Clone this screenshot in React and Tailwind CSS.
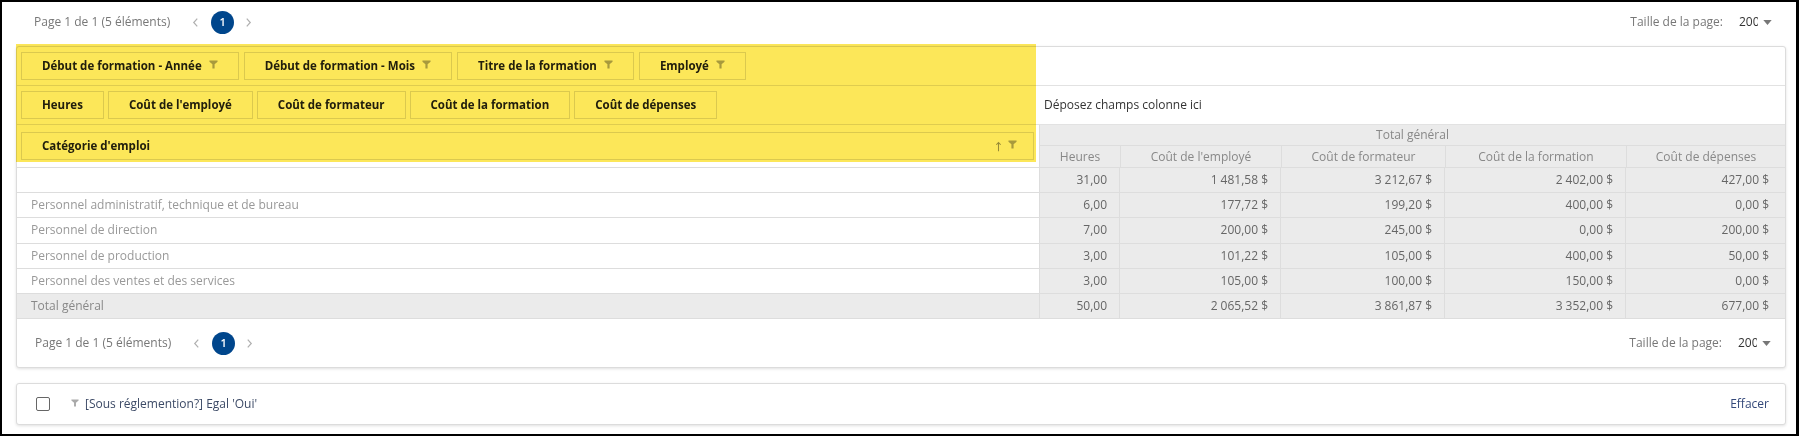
import React from 'react'

const font = { fontFamily: '"Open Sans", "Liberation Sans", sans-serif' }

const Funnel = ({ className = '' }) => (
  <svg viewBox="0 0 10 10" className={className} fill="currentColor">
    <path d="M0.5 0.5h9v1.4L6.2 4.8V9.5H3.8V4.8L0.5 1.9z" />
  </svg>
)

const ArrowUp = ({ className = '' }) => (
  <svg viewBox="0 0 8 12" className={className} fill="none" stroke="currentColor" strokeWidth="1.2">
    <path d="M4 11.5V1.5M1.5 4L4 1.5 6.5 4" />
  </svg>
)

const Chevron = ({ dir }) => (
  <svg viewBox="0 0 8 12" className="w-[7px] h-[11px] text-[#b0b0b0]" fill="none" stroke="currentColor" strokeWidth="1.4">
    <path d={dir === 'left' ? 'M6 1.5L2 6l4 4.5' : 'M2 1.5L6 6l-4 4.5'} />
  </svg>
)

const Pager = () => (
  <div className="flex items-center justify-between h-full pl-[18px] pr-[14px]">
    <div className="flex items-center">
      <span className="text-[12px] text-[#777]">Page 1 de 1 (5 éléments)</span>
      <span className="ml-[22px]"><Chevron dir="left" /></span>
      <span className="ml-[12px] w-[23px] h-[23px] rounded-full bg-[#00468c] text-white text-[11px] font-semibold flex items-center justify-center">1</span>
      <span className="ml-[11px]"><Chevron dir="right" /></span>
    </div>
    <div className="flex items-center">
      <span className="text-[12px] text-[#777]">Taille de la page:</span>
      <span className="ml-[16px] w-[19px] overflow-hidden whitespace-nowrap text-[12px] text-[#333]">200</span>
      <svg viewBox="0 0 10 6" className="ml-[5px] w-[9px] h-[5px] text-[#777]" fill="currentColor">
        <path d="M0 0h10L5 6z" />
      </svg>
    </div>
  </div>
)

const FieldBox = ({ label, filter, sort, wide }) => (
  <div className={`h-[28px] border border-[#dedede] bg-white flex items-center px-5 text-[11.5px] font-bold text-[#222] whitespace-nowrap ${wide ? 'flex-1 justify-between pl-5 pr-4' : ''}`}>
    <span>{label}</span>
    {(filter || sort) && (
      <span className="flex items-center gap-[6px] ml-[7px]">
        {sort && <ArrowUp className="w-[7px] h-[11px] text-[#999]" />}
        <Funnel className="w-[9px] h-[9px] text-[#aaa] -mt-[3px]" />
      </span>
    )}
  </div>
)

const widths = ['w-[80px]', 'w-[161px]', 'w-[164px]', 'w-[181px]', 'flex-1']
const heads = ['Heures', "Coût de l'employé", 'Coût de formateur', 'Coût de la formation', 'Coût de dépenses']

const rows = [
  { label: '', vals: ['31,00', '1 481,58 $', '3 212,67 $', '2 402,00 $', '427,00 $'] },
  { label: 'Personnel administratif, technique et de bureau', vals: ['6,00', '177,72 $', '199,20 $', '400,00 $', '0,00 $'] },
  { label: 'Personnel de direction', vals: ['7,00', '200,00 $', '245,00 $', '0,00 $', '200,00 $'] },
  { label: 'Personnel de production', vals: ['3,00', '101,22 $', '105,00 $', '400,00 $', '50,00 $'] },
  { label: 'Personnel des ventes et des services', vals: ['3,00', '105,00 $', '100,00 $', '150,00 $', '0,00 $'] },
]
const total = ['50,00', '2 065,52 $', '3 861,87 $', '3 352,00 $', '677,00 $']

const DataRow = ({ label, vals, isTotal }) => (
  <div className={`flex h-[25.2px] border-b border-[#dddddd] text-[12px] ${isTotal ? 'bg-[#ebebeb]' : ''}`}>
    <div className={`w-[1022px] flex items-center pl-[14px] ${isTotal ? 'text-[#888]' : 'text-[#999]'}`}>{label}</div>
    {vals.map((v, i) => (
      <div key={i} className={`${widths[i]} bg-[#ebebeb] border-l border-[#dddddd] flex items-center justify-end pr-3 text-[#666] whitespace-nowrap ${i === 4 ? 'pr-4' : ''}`}>
        {v}
      </div>
    ))}
  </div>
)

export default function App() {
  return (
    <div style={font} className="w-[1799px] h-[436px] border-2 border-r-[3px] border-black bg-white pl-[14px] pr-[10px] relative overflow-hidden">
      <div className="h-[44px] pb-[4px]">
        <Pager />
      </div>

      <div className="rounded-[3px] border border-[#dcdcdc] shadow-[0_1px_3px_rgba(0,0,0,0.12)] bg-white">
        {/* filter fields */}
        <div className="h-[39px] border-b border-[#e2e2e2] flex items-start gap-[5px] pl-[4px] pt-[5px]">
          <FieldBox label="Début de formation - Année" filter />
          <FieldBox label="Début de formation - Mois" filter />
          <FieldBox label="Titre de la formation" filter />
          <FieldBox label="Employé" filter />
        </div>

        {/* data fields + column area */}
        <div className="h-[39px] border-b border-[#e2e2e2] flex">
          <div className="w-[1022px] flex items-start gap-[4px] pl-[4px] pt-[5px]">
            <FieldBox label="Heures" />
            <FieldBox label="Coût de l'employé" />
            <FieldBox label="Coût de formateur" />
            <FieldBox label="Coût de la formation" />
            <FieldBox label="Coût de dépenses" />
          </div>
          <div className="flex-1 flex items-center pl-[5px] text-[12px] text-[#333]">Déposez champs colonne ici</div>
        </div>

        {/* row area + column headers */}
        <div className="flex border-b border-[#dddddd]">
          <div className="w-[1022px] flex pl-[4px] pr-[5px] pt-[7px] pb-[7px]">
            <FieldBox label="Catégorie d'emploi" filter sort wide />
          </div>
          <div className="flex-1 bg-[#ebebeb] border-l border-[#dddddd] text-[12px] text-[#888]">
            <div className="h-[21px] border-b border-[#dddddd] flex items-center justify-center">Total général</div>
            <div className="h-[21px] flex">
              {heads.map((h, i) => (
                <div key={h} className={`${widths[i]} ${i ? 'border-l border-[#dddddd]' : ''} flex items-center justify-center whitespace-nowrap`}>{h}</div>
              ))}
            </div>
          </div>
        </div>

        {rows.map((r, i) => (
          <DataRow key={i} {...r} />
        ))}
        <DataRow label="Total général" vals={total} isTotal />

        <div className="h-[48px]">
          <Pager />
        </div>
      </div>

      {/* filter summary */}
      <div className="mt-[15px] h-[42px] rounded-[3px] border border-[#dcdcdc] shadow-[0_1px_3px_rgba(0,0,0,0.12)] bg-white flex items-center justify-between pl-[19px] pr-[16px]">
        <div className="flex items-center">
          <span className="w-[14px] h-[14px] border-[1.5px] border-[#666] rounded-[2px]" />
          <Funnel className="ml-[21px] w-[8px] h-[8px] text-[#aaa] -mt-[2px]" />
          <span className="ml-[6px] text-[12px] text-[#3c4a66]">[Sous réglemention?] Egal 'Oui'</span>
        </div>
        <span className="text-[12px] text-[#34497a]">Effacer</span>
      </div>

      {/* highlight overlay */}
      <div className="absolute left-[14px] top-[42px] w-[1020px] h-[118px] bg-[#fce759] mix-blend-multiply pointer-events-none" />
    </div>
  )
}
